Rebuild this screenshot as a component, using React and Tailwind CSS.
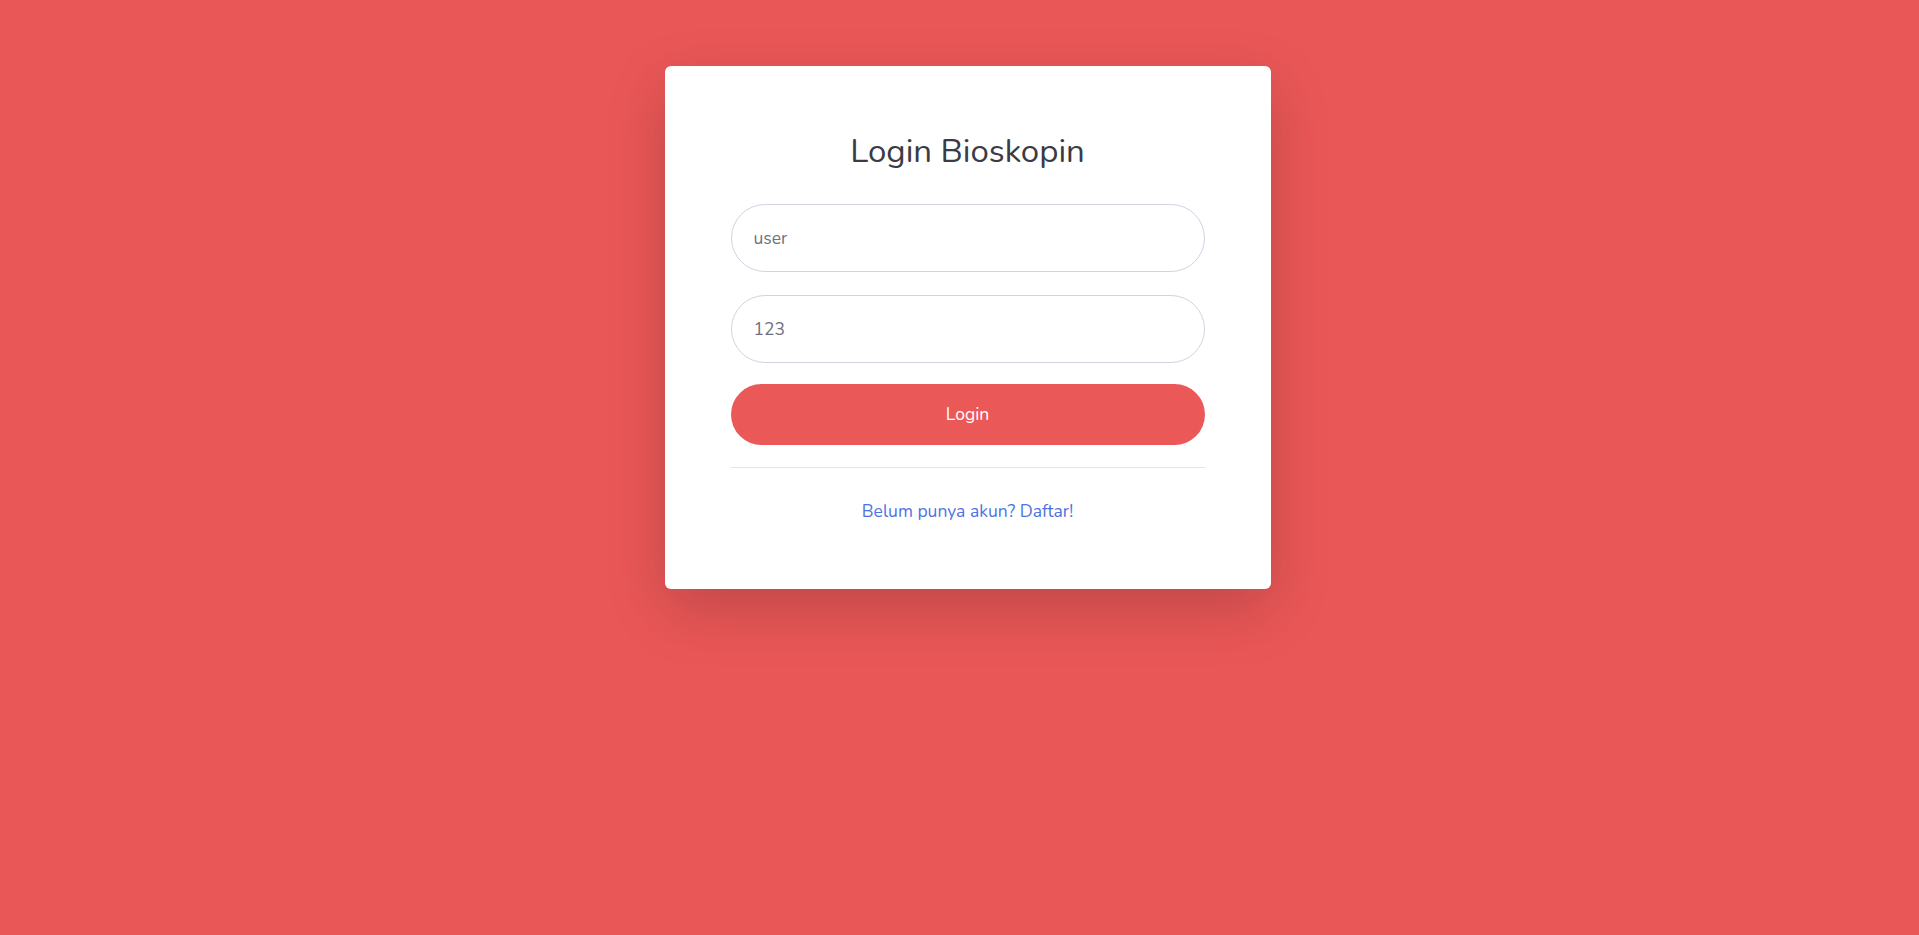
export default function App() {
  return (
    <div
      className="min-h-[935px] w-full bg-[#ea5757] flex justify-center pl-4 pt-[66px]"
      style={{ fontFamily: '"Nunito", "Lato", "Noto Sans", sans-serif' }}
    >
      <div className="w-[606px] h-[523px] bg-white rounded-[6px] shadow-[0_20px_60px_rgba(0,0,0,0.18)] px-[66px] pt-[66px] flex flex-col">
        <h1 className="h-[40px] leading-[40px] text-center text-[33px] font-normal text-[#3a3b45]">
          Login Bioskopin
        </h1>
        <form className="mt-[32px] flex flex-col" onSubmit={(e) => e.preventDefault()}>
          <input
            type="text"
            placeholder="user"
            className="h-[68px] w-full rounded-full border border-[#d1d3e2] pl-[22px] pr-5 text-[17.5px] text-[#6e707e] placeholder:text-[#6e707e] outline-none"
          />
          <input
            type="text"
            placeholder="123"
            className="mt-[23px] h-[68px] w-full rounded-full border border-[#d1d3e2] pl-[22px] pr-5 text-[17.5px] text-[#6e707e] placeholder:text-[#6e707e] outline-none"
          />
          <button
            type="submit"
            className="mt-[21px] h-[61px] w-full rounded-full bg-[#eb5858] text-white text-[17.5px]"
          >
            Login
          </button>
        </form>
        <hr className="mt-[22px] border-0 border-t border-[#e3e6f0]" />
        <div className="mt-[30px] h-[27px] leading-[27px] text-center">
          <a href="#" className="text-[17.5px] text-[#4e73df]">
            Belum punya akun? Daftar!
          </a>
        </div>
      </div>
    </div>
  );
}
